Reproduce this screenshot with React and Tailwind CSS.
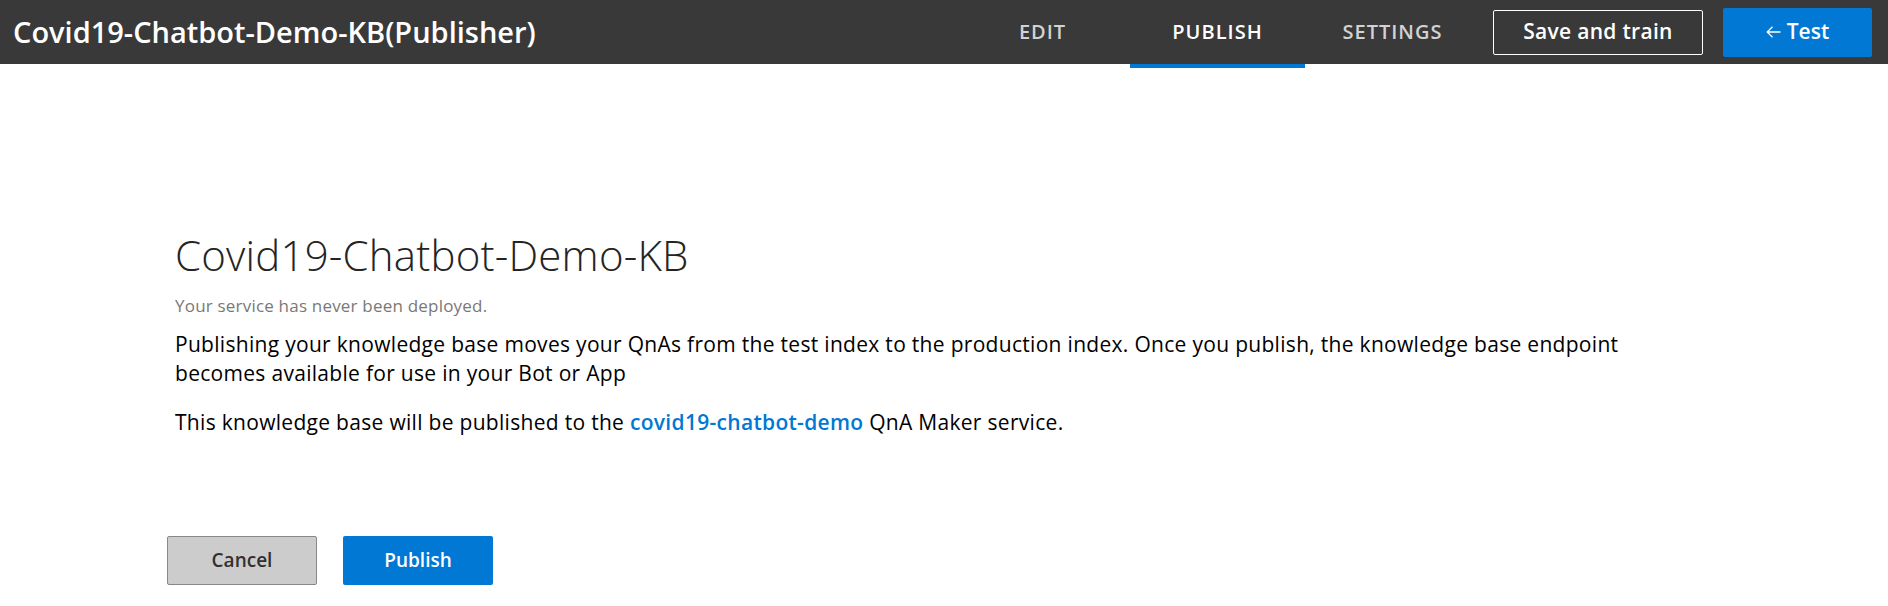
import React from 'react';

const font = { fontFamily: '"Open Sans", "Noto Sans", sans-serif' };

function Header() {
  const tabs = ["EDIT", "PUBLISH", "SETTINGS"];
  return (
    <header className="h-16 bg-[#393939] flex items-center text-white">
      <h1 className="pl-[13px] text-[29px] font-semibold flex-1">
        Covid19-Chatbot-Demo-KB(Publisher)
      </h1>
      <nav className="flex h-full">
        {tabs.map((t) => (
          <div key={t} className="relative w-[175px] h-full flex items-center justify-center">
            <span className={`text-[20px] font-semibold tracking-[1px] ${t === "PUBLISH" ? "text-white" : "text-[#d2d2d2]"}`}>
              {t}
            </span>
            {t === "PUBLISH" && (
              <div className="absolute left-0 right-0 -bottom-1 h-1 bg-[#0078d4]" />
            )}
          </div>
        ))}
      </nav>
      <button className="ml-[13px] w-[210px] h-[45px] border border-white rounded-[2px] text-[21px] font-semibold tracking-[0.3px]">
        Save and train
      </button>
      <button className="ml-[20px] mr-4 w-[149px] h-[49px] bg-[#0078d4] rounded-[2px] text-[21px] font-semibold flex items-center justify-center gap-[6px]">
        <svg width="15" height="12" viewBox="0 0 15 12" fill="none" stroke="white" strokeWidth="1.3">
          <path d="M14.5 6H1.2M6.5 0.8L1.2 6l5.3 5.2" />
        </svg>
        <span>Test</span>
      </button>
    </header>
  );
}

export default function App() {
  return (
    <div style={font} className="w-[1888px] h-[606px] bg-white overflow-hidden">
      <Header />
      <main className="pl-[175px] pt-[167px]">
        <h2 className="text-[42px] font-light text-[#252423] leading-[48px] tracking-[0.2px]">
          Covid19-Chatbot-Demo-KB
        </h2>
        <p className="mt-[17px] text-[17px] text-[#7a7876] leading-5 tracking-[0.2px]">
          Your service has never been deployed.
        </p>
        <p className="mt-[14px] w-[1460px] text-[21px] text-black leading-[29px] tracking-[0.3px]">
          Publishing your knowledge base moves your QnAs from the test index to the production index. Once you publish, the knowledge base endpoint becomes available for use in your Bot or App
        </p>
        <p className="mt-[20px] text-[21px] text-black leading-[29px] tracking-[0.3px]">
          This knowledge base will be published to the{" "}
          <a className="text-[#0078d4] font-semibold">covid19-chatbot-demo</a> QnA Maker service.
        </p>
        <div className="flex gap-[26px] mt-[99px] -ml-2">
          <button className="w-[150px] h-[49px] bg-[#cccccc] border border-[#8a8886] rounded-[2px] text-[19px] font-semibold text-[#323130]">
            Cancel
          </button>
          <button className="w-[150px] h-[49px] bg-[#0078d4] rounded-[2px] text-[19px] font-semibold text-white">
            Publish
          </button>
        </div>
      </main>
    </div>
  );
}
